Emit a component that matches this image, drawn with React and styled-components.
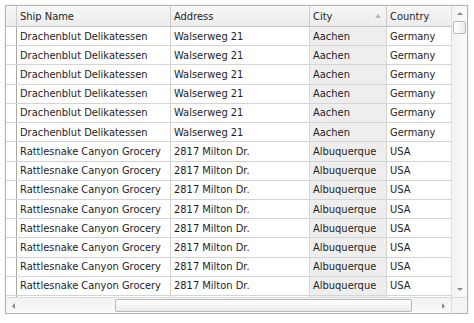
import { createGlobalStyle, styled } from "styled-components";

const GlobalStyle = createGlobalStyle`
  html, body {
    margin: 0;
    padding: 0;
    background: #ffffff;
  }
  body {
    font-family: "DejaVu Sans Condensed", "DejaVu Sans", Verdana, sans-serif;
    font-stretch: semi-condensed;
  }
`;

const Page = styled.div`
  padding: 5px 0 0 5px;
`;

const GridFrame = styled.div`
  width: 463px;
  height: 309px;
  border: 1px solid #b4b4b4;
  box-shadow: 0 0 2px rgba(0, 0, 0, 0.12);
  display: grid;
  grid-template-columns: 1fr 16px;
  grid-template-rows: 1fr 16px;
  overflow: hidden;
  background: #fff;
  box-sizing: border-box;
`;

const Viewport = styled.div`
  overflow: hidden;
  display: flex;
  flex-direction: column;
`;

const COLS = "11px 154px 139px 77px 80px";

const HeaderRow = styled.div`
  display: grid;
  grid-template-columns: ${COLS};
  height: 20px;
  flex-shrink: 0;
  background: linear-gradient(#f7f7f7, #ececec);
  border-bottom: 1px solid #c4c4c4;
`;

const HeaderCell = styled.div`
  display: flex;
  align-items: center;
  justify-content: space-between;
  padding: 0 4px 0 3px;
  border-right: 1px solid #cdcdcd;
  font-size: 11px;
  color: #1e1e1e;
  white-space: nowrap;
  overflow: hidden;
`;

const SortArrow = styled.span`
  width: 0;
  height: 0;
  border-left: 3px solid transparent;
  border-right: 3px solid transparent;
  border-bottom: 4px solid #b8b8b8;
  margin-right: 1px;
`;

const Row = styled.div`
  display: grid;
  grid-template-columns: ${COLS};
  height: 19.23px;
  flex-shrink: 0;
  box-sizing: border-box;
  border-bottom: 1px solid #d4d4d4;
`;

const Cell = styled.div`
  display: flex;
  align-items: center;
  padding: 0 3px;
  border-right: 1px solid ${(p) => (p.$indicator ? "#a8a8a8" : "#d4d4d4")};
  background: ${(p) => (p.$sorted ? "#eeeeee" : "#fff")};
  font-size: 11px;
  color: #1e1e1e;
  white-space: nowrap;
  overflow: hidden;
`;

const VScroll = styled.div`
  background: linear-gradient(90deg, #f2f2f2, #fafafa);
  border-left: 1px solid #dcdcdc;
  display: flex;
  flex-direction: column;
  align-items: center;
`;

const HScroll = styled.div`
  background: linear-gradient(#f2f2f2, #fafafa);
  border-top: 1px solid #dcdcdc;
  display: flex;
  align-items: center;
`;

const Corner = styled.div`
  background: #f4f4f4;
  border-top: 1px solid #dcdcdc;
  border-left: 1px solid #dcdcdc;
`;

const ArrowBox = styled.div`
  width: 15px;
  height: 15px;
  flex-shrink: 0;
  display: flex;
  align-items: center;
  justify-content: center;
`;

const Tri = styled.span`
  width: 0;
  height: 0;
  ${(p) =>
    p.$dir === "up" &&
    `border-left:3px solid transparent;border-right:3px solid transparent;border-bottom:3px solid #8a8a8a;`}
  ${(p) =>
    p.$dir === "down" &&
    `border-left:3px solid transparent;border-right:3px solid transparent;border-top:3px solid #8a8a8a;`}
  ${(p) =>
    p.$dir === "left" &&
    `border-top:3px solid transparent;border-bottom:3px solid transparent;border-right:3px solid #8a8a8a;`}
  ${(p) =>
    p.$dir === "right" &&
    `border-top:3px solid transparent;border-bottom:3px solid transparent;border-left:3px solid #8a8a8a;`}
`;

const VTrack = styled.div`
  flex: 1;
  width: 100%;
  padding: 0 1px;
  box-sizing: border-box;
`;

const VThumb = styled.div`
  height: 11px;
  border: 1px solid #b8b8b8;
  border-radius: 2px;
  background: linear-gradient(90deg, #ffffff, #ececec);
`;

const HTrack = styled.div`
  flex: 1;
  height: 100%;
  padding: 1px 0 1px 94px;
  box-sizing: border-box;
  display: flex;
`;

const HThumb = styled.div`
  width: 297px;
  height: 100%;
  box-sizing: border-box;
  border: 1px solid #b8b8b8;
  border-radius: 2px;
  background: linear-gradient(#ffffff, #ececec);
`;

const rows = [
  ...Array(6).fill(["Drachenblut Delikatessen", "Walserweg 21", "Aachen", "Germany"]),
  ...Array(9).fill(["Rattlesnake Canyon Grocery", "2817 Milton Dr.", "Albuquerque", "USA"]),
];

export default function App() {
  return (
    <Page>
      <GlobalStyle />
      <GridFrame>
        <Viewport>
          <HeaderRow>
            <HeaderCell />
            <HeaderCell>Ship Name</HeaderCell>
            <HeaderCell>Address</HeaderCell>
            <HeaderCell>
              City <SortArrow />
            </HeaderCell>
            <HeaderCell>Country</HeaderCell>
          </HeaderRow>
          {rows.map((r, i) => (
            <Row key={i}>
              <Cell $indicator />
              <Cell>{r[0]}</Cell>
              <Cell>{r[1]}</Cell>
              <Cell $sorted>{r[2]}</Cell>
              <Cell>{r[3]}</Cell>
            </Row>
          ))}
        </Viewport>
        <VScroll>
          <ArrowBox>
            <Tri $dir="up" />
          </ArrowBox>
          <VTrack>
            <VThumb />
          </VTrack>
          <ArrowBox>
            <Tri $dir="down" />
          </ArrowBox>
        </VScroll>
        <HScroll>
          <ArrowBox>
            <Tri $dir="left" />
          </ArrowBox>
          <HTrack>
            <HThumb />
          </HTrack>
          <ArrowBox>
            <Tri $dir="right" />
          </ArrowBox>
        </HScroll>
        <Corner />
      </GridFrame>
    </Page>
  );
}
